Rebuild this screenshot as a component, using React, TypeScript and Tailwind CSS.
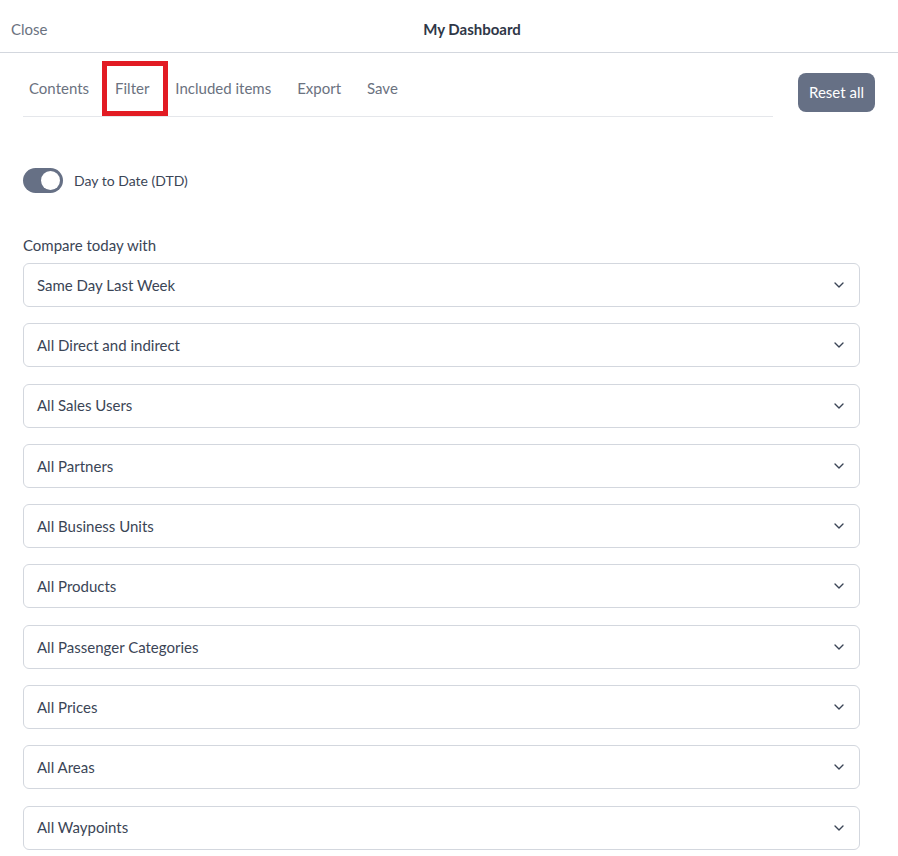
import { ChevronDown } from "lucide-react";

const filters = [
  "Same Day Last Week",
  "All Direct and indirect",
  "All Sales Users",
  "All Partners",
  "All Business Units",
  "All Products",
  "All Passenger Categories",
  "All Prices",
  "All Areas",
  "All Waypoints",
];

const tabs = ["Contents", "Filter", "Included items", "Export", "Save"];

export default function App() {
  return (
    <div className="w-[898px] h-[856px] overflow-hidden bg-white text-[#3b4556]" style={{ fontFamily: 'Lato, "Open Sans", sans-serif' }}>
      {/* Header */}
      <div className="relative h-[53px] border-b border-[#d3d7de] flex items-center pt-[6px]">
        <span className="pl-[11px] text-[15px] text-[#6b7280]">Close</span>
        <span className="absolute left-0 right-0 text-center pl-[46px] text-[15px] font-bold text-[#2f3747]">My Dashboard</span>
      </div>

      {/* Tabs row */}
      <div className="flex items-start px-[23px]">
        <div className="flex-1 h-[64px] border-b border-[#e5e7eb] flex items-center gap-[26px] pl-[6px] text-[15px] text-[#6b7280]">
          {tabs.map((t) => (
            <div key={t} className="relative h-full flex items-center pt-2">
              <span>{t}</span>
              {t === "Filter" && (
                <div className="absolute top-2 bottom-0 -left-[13px] -right-[19px] border-[5px] border-[#e21b23]" />
              )}
            </div>
          ))}
        </div>
        <button className="ml-[25px] mt-5 w-[77px] h-[39px] rounded-lg bg-[#667085] text-white text-[15px]">
          Reset all
        </button>
      </div>

      {/* Toggle */}
      <div className="flex items-center gap-[11px] px-[23px] mt-[51px]">
        <div className="w-10 h-[25px] rounded-full bg-[#667085] flex items-center justify-end pr-[3px]">
          <div className="w-[19px] h-[19px] rounded-full bg-white" />
        </div>
        <span className="text-[14px]">Day to Date (DTD)</span>
      </div>

      {/* Filters */}
      <div className="pl-[23px] pr-[38px] mt-[42px]">
        <div className="text-[15px] leading-[20px] mb-[8px]">Compare today with</div>
        <div className="flex flex-col gap-[16.3px]">
          {filters.map((f) => (
            <div
              key={f}
              className="h-[44px] border border-[#d3d7de] rounded-md flex items-center justify-between pl-[13px] pr-[12px] text-[15px]"
            >
              <span>{f}</span>
              <ChevronDown size={16} strokeWidth={2} className="text-[#3b4556]" />
            </div>
          ))}
        </div>
      </div>
    </div>
  );
}
